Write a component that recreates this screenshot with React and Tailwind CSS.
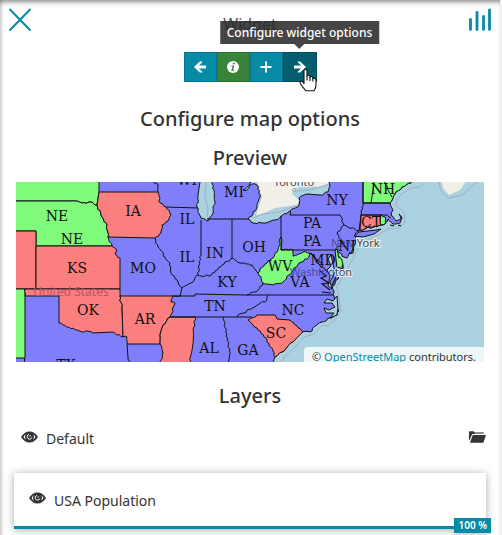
import React from "react";

const RED = "#fb7f7f";
const GREEN = "#80fb7c";
const BLUE = "#7f7ffb";

// Outline of the US land mass inside the preview extent.
const MAINLAND = [
  [10, 176], [199, 176], [200, 182], [198, 195], [197, 207], [201, 218], [207, 221], [212, 215], [215, 202],
  [214, 190], [212, 182], [212, 176], [253, 176], [250, 184], [243, 190], [247, 190], [252, 184], [257, 185],
  [260, 197], [257, 207], [253, 214], [248, 219], [253, 223], [263, 223], [275, 220], [281, 216], [290, 211],
  [299, 205], [299, 198], [307, 194], [320, 195], [328, 192], [330, 185], [328, 176], [412, 176], [411, 183],
  [402, 187], [395, 194], [390, 203], [393, 210], [391, 215], [396, 221], [401, 219], [399, 214], [402, 218],
  [400, 223], [393, 224], [388, 219], [385, 224], [381, 225], [360, 230], [355, 234], [356, 240], [353, 249],
  [347, 258], [344, 257], [340, 253], [337, 251], [340, 259], [343, 268], [340, 275], [333, 286], [334, 296],
  [338, 309], [337, 315], [330, 318], [322, 322], [318, 324], [310, 332], [302, 332], [293, 342], [282, 352],
  [275, 357], [272, 366], [10, 366],
];

const STATES = [
  { id: "SD", fill: GREEN, pts: [[10, 176], [99, 176], [99, 192], [97, 205], [90, 202], [82, 203], [77, 201], [10, 201]] },
  { id: "NE", fill: GREEN, pts: [[10, 201], [77, 201], [82, 203], [90, 202], [97, 205], [102, 217], [107, 225], [108, 237], [112, 246], [36, 246], [36, 231], [10, 231]] },
  { id: "CO", fill: RED, pts: [[10, 231], [36, 231], [36, 289], [10, 289]] },
  { id: "KS", fill: RED, pts: [[36, 246], [112, 246], [117, 250], [115, 254], [120, 258], [120, 289], [36, 289]] },
  { id: "NM", fill: GREEN, pts: [[10, 289], [25, 289], [25, 358], [10, 358]] },
  { id: "OK", fill: RED, pts: [[25, 289], [120, 289], [120, 296], [122, 307], [123, 337], [113, 332], [93, 333], [77, 330], [63, 325], [59, 323], [59, 296], [25, 296]] },
  { id: "AR", fill: RED, pts: [[120, 296], [173, 296], [171, 302], [175, 303], [170, 317], [163, 325], [160, 335], [160, 344], [127, 344], [127, 337], [123, 337], [122, 307]] },
  { id: "MS", fill: RED, pts: [[170, 317], [195, 317], [190, 366], [160, 366], [163, 353], [160, 344], [160, 335], [163, 325]] },
  { id: "IA", fill: RED, pts: [[99, 192], [158, 192], [160, 203], [166, 207], [171, 215], [168, 221], [162, 225], [161, 233], [155, 238], [108, 237], [107, 225], [102, 217], [97, 205]] },
  { id: "WV", fill: GREEN, pts: [[281, 237], [281, 250], [293, 250], [293, 256], [303, 252], [311, 253], [307, 259], [299, 263], [292, 272], [283, 282], [273, 285], [263, 283], [258, 273], [265, 264], [273, 258], [278, 250]] },
  { id: "SC", fill: RED, pts: [[248, 320], [257, 315], [275, 315], [277, 319], [290, 320], [303, 332], [293, 342], [282, 352], [275, 357], [273, 351], [267, 340], [257, 328]] },
  { id: "VT-NH", fill: GREEN, pts: [[363, 176], [412, 176], [411, 183], [402, 187], [395, 194], [390, 203], [363, 203]] },
  { id: "CT", fill: RED, pts: [[361, 215], [381, 215], [381, 225], [370, 227], [360, 230]] },
  { id: "RI", fill: GREEN, pts: [[381, 215], [385, 217], [386, 223], [381, 225]] },
  { id: "DE", fill: GREEN, pts: [[335, 250], [338, 249], [338, 255], [342, 260], [343, 268], [337, 268]] },
];

const BORDERS = [
  [[153, 182], [158, 185], [158, 192]],
  [[166, 207], [198, 208]],
  [[155, 238], [158, 247], [165, 257], [170, 263], [171, 273], [178, 282], [182, 288], [180, 296], [173, 296]],
  [[201, 220], [201, 255], [198, 275]],
  [[207, 219], [248, 219]],
  [[232, 219], [232, 258]],
  [[182, 288], [193, 282], [197, 275], [209, 276], [222, 265], [233, 258], [240, 263], [252, 265], [258, 273]],
  [[173, 296], [195, 296], [195, 294], [245, 295], [333, 295]],
  [[247, 295], [258, 290], [263, 283]],
  [[268, 295], [267, 300], [251, 309], [238, 315], [237, 317]],
  [[170, 317], [252, 317]],
  [[223, 317], [230, 353], [228, 366]],
  [[127, 344], [128, 358], [131, 366]],
  [[281, 216], [281, 250], [335, 250]],
  [[290, 211], [290, 215], [340, 215], [344, 225], [359, 231], [361, 215], [363, 203], [363, 176]],
  [[344, 225], [337, 234], [343, 243], [335, 250]],
  [[363, 203], [390, 203]],
  [[361, 215], [385, 215], [391, 218]],
  [[375, 176], [373, 190], [371, 203]],
  [[383, 176], [388, 190], [392, 197]],
  [[311, 253], [318, 260], [325, 269], [333, 273]],
  [[25, 358], [25, 366]],
];

const LABELS = [
  ["SD", 56, 182], ["NE", 57, 221], ["NE", 72, 244], ["IA", 133, 216], ["KS", 77, 273], ["OK", 88, 315],
  ["AR", 145, 324], ["MO", 143, 273], ["WI", 187, 185], ["IL", 187, 224], ["IL", 187, 262], ["MI", 234, 197],
  ["IN", 215, 258], ["OH", 254, 252], ["KY", 227, 287], ["TN", 215, 311], ["AL", 209, 353], ["GA", 248, 355],
  ["SC", 276, 338], ["NC", 293, 315], ["VA", 300, 287], ["WV", 280, 271], ["PA", 312, 228], ["PA", 312, 246],
  ["NY", 337, 205], ["NH", 383, 194], ["CT", 371, 227], ["NJ", 347, 251], ["MD", 323, 265], ["TX", 66, 370],
];

// Deterministic wobble so that neighbouring states share the same river line.
function roughSegment([ax, ay], [bx, by]) {
  const dx = bx - ax;
  const dy = by - ay;
  const len = Math.hypot(dx, dy);
  const straight = (Math.abs(dx) < 3 || Math.abs(dy) < 3) && len > 13;
  if (straight || len < 4) return [[bx, by]];
  const flip = ax > bx || (ax === bx && ay > by);
  const [sx, sy, ex, ey] = flip ? [bx, by, ax, ay] : [ax, ay, bx, by];
  const n = Math.max(2, Math.round(len / 2.2));
  const out = [];
  for (let i = 1; i < n; i++) {
    const t = i / n;
    const h = Math.sin(sx * 12.9 + sy * 78.2 + i * 37.7) * 43758.5;
    const k = (h - Math.floor(h) - 0.5) * 2;
    out.push([sx + (ex - sx) * t - ((ey - sy) / len) * k, sy + (ey - sy) * t + ((ex - sx) / len) * k]);
  }
  if (flip) out.reverse();
  out.push([bx, by]);
  return out;
}

function toPath(pts, closed) {
  const list = closed ? [...pts, pts[0]] : pts;
  let d = `M${list[0].join(" ")}`;
  for (let i = 1; i < list.length; i++) {
    for (const p of roughSegment(list[i - 1], list[i])) d += `L${p[0].toFixed(1)} ${p[1].toFixed(1)}`;
  }
  return closed ? d + "Z" : d;
}

function PreviewMap() {
  return (
    <svg viewBox="16 182 468 180" className="block w-full" role="img" aria-label="Map preview">
      <rect x="16" y="182" width="468" height="180" fill="#aad3df" />
      <path d="M256 178L334 178L331 183L318 187L305 185L294 189L292 194L299 200L297 205L275 208L262 214L256 215L262 198Z" fill="#f2efe9" />
      <path d="M441 178L443 188L449 195L460 190L468 178Z" fill="#f2efe9" />
      <g fill="none" stroke="#a99ac4" strokeWidth="1" opacity=".75">
        <path d="M425 182L420 187L411 188L403 193L397 199L396 206L404 212L405 222L399 228L388 229L374 237L361 243L357 251L350 264L346 272L337 286L340 304L341 312L335 320L328 326L322 325L314 334L304 337L296 346L286 355L281 362" />
        <path d="M438 180L442 193L449 198L462 195L471 187L479 180" />
        <path d="M206 182L205 198L208 208L207 221" />
        <path d="M254 218L262 214L280 212L297 205M296 191L310 190L330 184" />
      </g>
      <path d={toPath(MAINLAND, true)} fill={BLUE} stroke="#111" strokeWidth="1" />
      <path d="M354 236L359 232L376 230L381 229L374 234L363 237Z" fill={BLUE} stroke="#111" />
      {STATES.map((s) => (
        <path key={s.id} d={toPath(s.pts, true)} fill={s.fill} stroke="#111" strokeWidth="1" />
      ))}
      {BORDERS.map((b, i) => (
        <path key={i} d={toPath(b, false)} fill="none" stroke="#111" strokeWidth="1" />
      ))}
      <path d="M331 255L333 264L335 272L330 282L332 289L328 286L330 276L327 270L331 266L328 259Z" fill="#aad3df" stroke="#111" />
      <path d="M337 296L333 301L327 299L324 303L332 303L335 307L329 310L324 308L326 313L334 313L330 318L337 315L338 308Z" fill="#aad3df" stroke="#111" />
      <path d="M319 270L326 276L321 278L329 283L322 284L330 290M322 292L331 293M318 263L322 268M336 277L332 286M390 225L394 226M398 225L401 226" fill="none" stroke="#111" strokeWidth="1.2" />

      <g fontFamily="'Noto Sans', sans-serif" fontSize="11">
        <text x="71" y="296" fontSize="12" textAnchor="middle" fill="#c4506a">United States</text>
        <g textAnchor="middle" fill="#444" stroke="#f4f4f4" strokeWidth="2" paintOrder="stroke">
          <text x="294" y="186">Toronto</text>
        </g>
        <circle cx="294" cy="190" r="1.5" fill="#fff" stroke="#777" strokeWidth=".7" />
        <text x="331" y="247">
          <tspan fill="#4b4b9f">New </tspan>
          <tspan fill="#444" stroke="#e8f1f4" strokeWidth="2" paintOrder="stroke">York</tspan>
        </text>
        <text x="290" y="276">
          <tspan fill="#4646a8">Washing</tspan>
          <tspan fill="#444" stroke="#e8f1f4" strokeWidth="2" paintOrder="stroke">ton</tspan>
        </text>
      </g>
      <g fontFamily="'DejaVu Serif', serif" fontSize="14" textAnchor="middle" fill="#111">
        {LABELS.map(([t, x, y]) => (
          <text key={t + x + y} x={x} y={y}>{t}</text>
        ))}
      </g>
    </svg>
  );
}

function Eye() {
  return (
    <svg viewBox="0 0 17 12" className="h-3 w-[17px]" aria-hidden="true">
      <path d="M0 6C2 2.500 5 .5 8.500 .5S15 2.500 17 6C15 9.500 12 11.500 8.500 11.500S2 9.500 0 6Z" fill="#333" />
      <path d="M2.600 6C3.300 4.700 4 3.900 5 3.300A4.500 4.500 0 0 0 5 8.700C4 8.100 3.300 7.300 2.600 6ZM14.400 6C13.700 4.700 13 3.900 12 3.300A4.500 4.500 0 0 1 12 8.700C13 8.100 13.700 7.300 14.400 6Z" fill="#fff" />
      <path d="M8 3.400A2.400 2.400 0 1 0 10.900 6.400" fill="none" stroke="#fff" strokeWidth="1" />
      <circle cx="9.200" cy="5" r=".7" fill="#fff" />
    </svg>
  );
}

function FolderOpen() {
  return (
    <svg viewBox="0 0 17 12" className="h-3 w-[17px]" aria-hidden="true">
      <path d="M0 9V.8Q0 .2 .6 .2H4.500L5.800 1.400H14.500V3H3.200L.6 9Z" fill="#333" />
      <path d="M5.800 1.400H14.500V3H5.800Z" fill="#888" />
      <path d="M3.700 4H17L14.300 11.800H1Z" fill="#333" />
    </svg>
  );
}

function Arrow({ right }) {
  return (
    <svg viewBox="0 0 12 12" className={right ? "size-3 rotate-180" : "size-3"} aria-hidden="true">
      <path d="M0 6L5.800 .4H8.300V1.200L4.900 4.600H12V7.400H4.900L8.300 10.800V11.600H5.800Z" fill="#fff" />
    </svg>
  );
}

function Plus() {
  return (
    <svg viewBox="0 0 12 12" className="size-3" aria-hidden="true">
      <path d="M6 .5V11.500M.5 6H11.500" stroke="#fff" strokeWidth="2" />
    </svg>
  );
}

function Info() {
  return (
    <svg viewBox="0 0 12 12" className="size-3" aria-hidden="true">
      <circle cx="6" cy="6" r="6" fill="#fff" />
      <path d="M6.100 1.700H8L7.600 3.300H5.700ZM4.500 4.400H7.400L6.200 8.800H7.200L7 9.800H4L4.200 8.800H4.700L5.600 5.400H4.300Z" fill="#398439" />
    </svg>
  );
}

function HandCursor() {
  return (
    <svg viewBox="0 0 18 24" className="pointer-events-none absolute top-4 right-0 h-6 w-[18px]" aria-hidden="true">
      <path
        d="M5 14V3Q5 1.200 6.500 1.200T8 3V8.500Q8 7.300 9.400 7.300T11 8.800V9.500Q11.200 8.300 12.500 8.500T13.800 10V10.800Q14.200 9.800 15.500 10.200T17 12V17Q17 20 15 22.800H7Q4 20 1.500 15.800Q.5 14 1.700 13.400T4 14.200L5 15.500Z"
        fill="#fff" stroke="#111" strokeWidth="1.100" strokeLinejoin="round"
      />
      <path d="M8 8.500V12.500M11 9V13M13.900 10.500V13.500" stroke="#111" strokeWidth="1.100" />
    </svg>
  );
}

const toolButton = "flex h-[30px] w-[33px] cursor-pointer items-center justify-center border";

export default function App() {
  return (
    <div className="min-h-screen bg-[#efefef] pr-[2px] font-['Noto_Sans','Open_Sans',sans-serif] text-[#333]">
      <main className="min-h-screen overflow-hidden bg-white pb-2 shadow-[inset_0_5px_5px_-3px_rgba(0,0,0,0.45),inset_4px_0_4px_-3px_rgba(0,0,0,0.25)]">
        <header className="flex h-13 items-start justify-between pt-2 pr-2 pl-2">
          <button type="button" aria-label="Close" className="cursor-pointer">
            <svg viewBox="0 0 24 24" className="size-6" aria-hidden="true">
              <path d="M1.500 1L22.500 22.500M22.500 1L1.500 22.500" stroke="#078aa3" strokeWidth="2" />
            </svg>
          </button>
          <h1 className="pt-1 text-base leading-6 text-[#555]">Widget</h1>
          <button type="button" aria-label="Charts" className="cursor-pointer">
            <svg viewBox="0 0 24 24" className="size-6" aria-hidden="true">
              <path d="M2.500 21.500V11.500M9 21.500V4.500M15.500 21.500V8.500M21.500 21.500V2" stroke="#078aa3" strokeWidth="2.800" strokeLinecap="round" />
            </svg>
          </button>
        </header>

        <div className="flex justify-center" role="toolbar" aria-label="Widget steps">
          <button type="button" aria-label="Back" className={`${toolButton} border-[#07788e] bg-[#078aa3]`}><Arrow /></button>
          <button type="button" aria-label="Info" className={`${toolButton} border-[#2f6f30] bg-[#398439]`}><Info /></button>
          <button type="button" aria-label="Add layer" className={`${toolButton} border-[#07788e] bg-[#078aa3]`}><Plus /></button>
          <div className="relative">
            <button type="button" aria-label="Next" aria-describedby="next-tip" className={`${toolButton} w-[34px] border-[#045061] bg-[#055d6e]`}><Arrow right /></button>
            <div id="next-tip" role="tooltip" className="absolute bottom-full left-1/2 mb-2 -translate-x-1/2 bg-[#2b2b2b]/88 px-[7px] py-1 text-center text-xs leading-[15px] font-medium whitespace-nowrap text-white">
              Configure widget options
              <span className="absolute top-full left-1/2 -ml-[5px] border-x-5 border-t-5 border-x-transparent border-t-[#474747]" />
            </div>
            <HandCursor />
          </div>
        </div>

        <h2 className="mt-[23px] text-center text-xl leading-7 font-medium">Configure map options</h2>
        <h2 className="mt-[11px] text-center text-xl leading-7 font-medium">Preview</h2>

        <section aria-label="Preview" className="relative mr-4 ml-4 mt-[10px]">
          <PreviewMap />
          <p className="absolute right-0 bottom-0 h-[15px] overflow-hidden rounded-tl bg-white/80 px-2 text-[11px] leading-5 whitespace-nowrap">
            © <a href="#osm" className="text-[#078aa3]">OpenStreetMap</a> contributors.
          </p>
        </section>

        <h2 className="mt-5 text-center text-xl leading-7 font-medium">Layers</h2>

        <div className="mx-[14px] mt-[14px] flex items-center justify-between px-[7px] leading-[30px]">
          <div className="flex items-center gap-2">
            <button type="button" aria-label="Toggle Default" className="cursor-pointer pb-1"><Eye /></button>
            <span className="text-sm leading-[30px]">Default</span>
          </div>
          <button type="button" aria-label="Open group" className="-mr-[7px] cursor-pointer pb-1"><FolderOpen /></button>
        </div>

        <div className="relative mx-[14px] mt-[19px] bg-white shadow-[0_1px_8px_rgba(0,0,0,0.35)]">
          <div className="flex h-[53px] items-center gap-2 px-[15px]">
            <button type="button" aria-label="Toggle USA Population" className="cursor-pointer pb-1"><Eye /></button>
            <label htmlFor="opacity" className="pt-[2px] text-sm">USA Population</label>
          </div>
          <input id="opacity" type="range" min="0" max="100" defaultValue="100" className="block h-[3px] w-full appearance-none bg-[#078aa3] [&::-webkit-slider-thumb]:h-0 [&::-webkit-slider-thumb]:w-0 [&::-webkit-slider-thumb]:appearance-none" />
          <output htmlFor="opacity" className="absolute -right-[5px] -bottom-1 bg-[#078aa3] px-1 text-[10px] leading-[15px] font-semibold text-white shadow-md">100 %</output>
        </div>
      </main>
    </div>
  );
}
